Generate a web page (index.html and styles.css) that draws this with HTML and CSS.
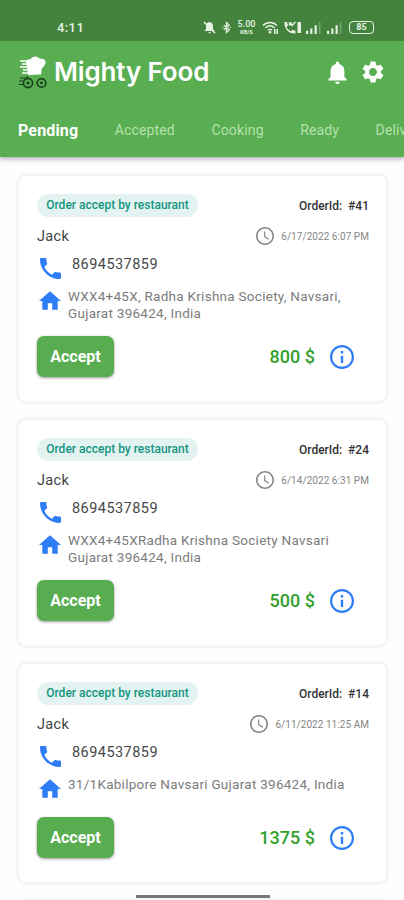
FILE: index.html
```html
<!DOCTYPE html>
<html lang="en">
<head>
<meta charset="utf-8">
<title>Mighty Food</title>
<link rel="stylesheet" href="styles.css">
</head>
<body>
<svg class="defs" aria-hidden="true">
  <symbol id="phone" viewBox="3 3 18 18"><path d="M6.62 10.79c1.44 2.83 3.76 5.14 6.59 6.59l2.2-2.2c.27-.27.67-.36 1.02-.24 1.12.37 2.33.57 3.57.57.55 0 1 .45 1 1V20c0 .55-.45 1-1 1C10.61 21 3 13.39 3 4c0-.55.45-1 1-1h3.500c.55 0 1 .45 1 1 0 1.250.2 2.450.57 3.570.11.35.03.74-.25 1.020l-2.200 2.200z"/></symbol>
  <symbol id="home" viewBox="2 3 20 17"><path d="M10 20v-6h4v6h5v-8h3L12 3 2 12h3v8z"/></symbol>
  <symbol id="clock" viewBox="2 2 20 20"><path d="M11.990 2C6.470 2 2 6.480 2 12s4.470 10 9.990 10C17.520 22 22 17.520 22 12S17.520 2 11.990 2zM12 20.300a8.300 8.300 0 1 1 0-16.600 8.300 8.300 0 0 1 0 16.600zM12.300 7H11v6l5 3.100.7-1.100-4.400-2.700z"/></symbol>
  <symbol id="info" viewBox="2 2 20 20"><path d="M11 7h2v2h-2zm0 4h2v6h-2zm1-9C6.480 2 2 6.480 2 12s4.480 10 10 10 10-4.480 10-10S17.520 2 12 2zm0 18.200a8.200 8.200 0 1 1 0-16.400 8.200 8.200 0 0 1 0 16.400z"/></symbol>
  <symbol id="signal" viewBox="0 0 14 11"><path d="M0 8h2v3H0zM4 6h2v5H4zM8 3h2v8H8z"/><path opacity=".3" d="M12 0h1.500v11H12z"/></symbol>
</svg>

<header class="header">
  <div class="status">
    <span class="time">4:11</span>
    <div class="status-icons">
      <svg class="s-mute" viewBox="0 0 13 13"><path d="M6.500 1c-2.600.4-3.500 2-3.500 4v3L1.500 10h10L10 8V5c0-2-1-3.600-3.500-4zM5 11h3l-1.500 1.500z"/><path class="slash" d="M1 1l11 11"/></svg>
      <svg class="s-bt" viewBox="0 0 10 13"><path class="line" d="M2 4l6 5-3 3V1l3 3-6 5M.3 6.500h1M8.700 6.500h1"/></svg>
      <span class="speed"><b>5.00</b><i>KB/S</i></span>
      <svg class="s-wifi" viewBox="0 0 17 13"><path class="line" d="M1 4.500c4-4 10-4 14 0M3.300 7c3-2.700 6.500-2.700 9.400 0M5.800 9.300c1.500-1.200 3-1.200 4.400 0"/><circle cx="8" cy="11.300" r="1.300"/><path d="M12 8h1.500v5H12zM14.500 8H16v5h-1.500z"/></svg>
      <svg class="s-call" viewBox="0 0 18 13"><path d="M1 1h2.500l1 3.500L3 6c1 2 2.500 3.500 4.500 4.300l1.300-1.500L12 10v2.500C5.500 13 .5 8 1 1z"/><path class="line" d="M6 2l2.500 2.500L12 1M6 4.500V2h2.500"/><path d="M14 1h3.500v11H14z"/></svg>
      <svg class="s-sig"><use href="#signal"/></svg>
      <svg class="s-sig"><use href="#signal"/></svg>
      <span class="battery">85</span>
    </div>
  </div>
  <div class="appbar">
    <svg class="logo" viewBox="0 0 30 34">
      <path class="white" d="M10 19L9 10C6.500 6 9 2.500 12.500 3.500 14-.5 20-.5 22 3c4-1 7 2 5 5.500-1 2-2 3-3 3.500l-1 6.500z"/>
      <path class="w-line" d="M2 5h8M4 8h6M2 11h8M5 14h5M4 17h7"/>
      <path class="b-line" d="M2 22h6M1 25h4M1 28.500h4M9 20l1 3"/>
      <circle class="wheel" cx="10" cy="27" r="4.600"/><circle cx="10" cy="27" r="1.500"/>
      <circle class="wheel" cx="23.500" cy="27" r="4.300"/><circle cx="23.500" cy="27" r="1.400"/>
    </svg>
    <h1 class="title">Mighty Food</h1>
    <svg class="bell" viewBox="4 2 16 20"><path d="M12 22c1.100 0 2-.9 2-2h-4c0 1.100.89 2 2 2zm6-6v-5c0-3.070-1.640-5.640-4.500-6.320V4c0-.83-.67-1.500-1.500-1.500s-1.500.67-1.500 1.500v.68C7.630 5.360 6 7.920 6 11v5l-2 2v1h16v-1l-2-2z"/></svg>
    <svg class="gear" viewBox="2 2 20 20"><path d="M19.140 12.940c.04-.3.06-.61.06-.94 0-.32-.02-.64-.07-.94l2.030-1.580a.49.49 0 0 0 .12-.61l-1.920-3.320a.488.488 0 0 0-.59-.22l-2.390.96c-.5-.38-1.030-.7-1.620-.94l-.36-2.540a.484.484 0 0 0-.48-.41h-3.840c-.24 0-.43.17-.47.41l-.36 2.540c-.59.24-1.130.57-1.620.94l-2.390-.96c-.22-.08-.47 0-.59.22L2.740 8.870c-.12.21-.08.47.12.61l2.030 1.580c-.05.3-.09.63-.09.94s.02.64.07.94l-2.030 1.580a.49.49 0 0 0-.12.61l1.920 3.320c.12.22.37.29.59.22l2.390-.96c.5.38 1.030.7 1.620.94l.36 2.540c.05.24.24.41.48.41h3.840c.24 0 .44-.17.47-.41l.36-2.540c.59-.24 1.130-.56 1.620-.94l2.390.96c.22.08.47 0 .59-.22l1.920-3.320c.12-.22.07-.47-.12-.61l-2.010-1.580zM12 15.600A3.610 3.610 0 0 1 8.400 12c0-1.980 1.620-3.600 3.600-3.600s3.600 1.620 3.600 3.600-1.620 3.600-3.600 3.600z"/></svg>
  </div>
  <nav class="tabs">
    <span class="tab active">Pending</span>
    <span class="tab">Accepted</span>
    <span class="tab">Cooking</span>
    <span class="tab">Ready</span>
    <span class="tab">Delivered</span>
  </nav>
</header>

<main class="orders">
  <article class="card">
    <div class="row top"><span class="pill">Order accept by restaurant</span><span class="order-id">OrderId:&nbsp; #41</span></div>
    <div class="row who"><span class="name">Jack</span><span class="date"><svg class="clock"><use href="#clock"/></svg><span class="stamp">6/17/2022 6:07 PM</span></span></div>
    <div class="phone"><svg class="phone-icon"><use href="#phone"/></svg><span class="number">8694537859</span></div>
    <div class="address"><svg class="home-icon"><use href="#home"/></svg><p class="place">WXX4+45X, Radha Krishna Society, Navsari,<br>Gujarat 396424, India</p></div>
    <div class="row actions"><button class="accept">Accept</button><span class="total"><span class="price">800 $</span><svg class="info"><use href="#info"/></svg></span></div>
  </article>
  <article class="card">
    <div class="row top"><span class="pill">Order accept by restaurant</span><span class="order-id">OrderId:&nbsp; #24</span></div>
    <div class="row who"><span class="name">Jack</span><span class="date"><svg class="clock"><use href="#clock"/></svg><span class="stamp">6/14/2022 6:31 PM</span></span></div>
    <div class="phone"><svg class="phone-icon"><use href="#phone"/></svg><span class="number">8694537859</span></div>
    <div class="address"><svg class="home-icon"><use href="#home"/></svg><p class="place">WXX4+45XRadha Krishna Society Navsari<br>Gujarat 396424, India</p></div>
    <div class="row actions"><button class="accept">Accept</button><span class="total"><span class="price">500 $</span><svg class="info"><use href="#info"/></svg></span></div>
  </article>
  <article class="card">
    <div class="row top"><span class="pill">Order accept by restaurant</span><span class="order-id">OrderId:&nbsp; #14</span></div>
    <div class="row who"><span class="name">Jack</span><span class="date"><svg class="clock"><use href="#clock"/></svg><span class="stamp">6/11/2022 11:25 AM</span></span></div>
    <div class="phone"><svg class="phone-icon"><use href="#phone"/></svg><span class="number">8694537859</span></div>
    <div class="address"><svg class="home-icon"><use href="#home"/></svg><p class="place">31/1Kabilpore Navsari Gujarat 396424, India</p></div>
    <div class="row actions"><button class="accept">Accept</button><span class="total"><span class="price">1375 $</span><svg class="info"><use href="#info"/></svg></span></div>
  </article>
  <article class="card"></article>
</main>
<div class="home-bar"></div>
</body>
</html>
```
FILE: styles.css
```css
* { box-sizing: border-box; }
body {
  display: flex;
  flex-direction: column;
  margin: 0;
  height: 900px;
  overflow: hidden;
  background: #fefefe;
  font-family: Roboto, sans-serif;
  color: #444;
}
svg { display: block; flex: none; fill: currentColor; }
.defs { position: absolute; width: 0; height: 0; }

.header {
  flex: none;
  height: 157px;
  background: #58ae51;
  color: #fff;
  box-shadow: 0 2px 5px rgba(60, 50, 90, .4);
}
.status {
  display: flex;
  justify-content: space-between;
  height: 41px;
  padding: 20px 30px 0 57px;
  background: #44833e;
  color: #e6f3e2;
}
.time { font-size: 13px; line-height: 16px; font-weight: 500; letter-spacing: .4px; }
.status-icons { display: flex; align-items: center; height: 15px; }
.line, .slash { fill: none; stroke: currentColor; stroke-width: 1.4; }
.slash { stroke-width: 1.600; }
.s-mute { width: 13px; height: 13px; margin-right: 6px; }
.s-bt { width: 9px; height: 13px; margin-right: 6px; }
.speed { width: 19px; margin-right: 6px; text-align: center; }
.speed b, .speed i { display: block; font-style: normal; }
.speed b { font-size: 9px; line-height: 9px; font-weight: 500; }
.speed i { font-size: 5.500px; line-height: 7px; font-weight: 700; }
.s-wifi { width: 17px; height: 13px; margin-right: 4px; }
.s-call { width: 19px; height: 13px; margin-right: 4px; }
.s-sig { width: 15px; height: 12px; margin-right: 6px; }
.battery {
  width: 25px;
  height: 13px;
  margin-left: 1px;
  border: 1.500px solid currentColor;
  border-radius: 4px;
  font-size: 9px;
  line-height: 11px;
  font-weight: 700;
  text-align: center;
}
.appbar { display: flex; align-items: center; height: 62px; padding: 0 20px 0 18px; }
.logo { width: 30px; height: 34px; margin-top: 1px; }
.white { fill: #fff; }
.w-line { fill: none; stroke: #fff; stroke-width: 1.300; }
.b-line, .wheel { fill: none; stroke: #163c19; stroke-width: 1.200; }
.wheel { stroke-width: 1.600; }
.logo circle:not(.wheel) { fill: #163c19; }
.title {
  flex: 1;
  margin: 0 0 0 6px;
  font: 600 26px/34px Inter, sans-serif;
  letter-spacing: -.15px;
  white-space: nowrap;
}
.bell { width: 19px; height: 23px; margin-right: 15px; }
.gear { width: 22px; height: 22px; }
.tabs { display: flex; align-items: center; height: 54px; padding-left: 18px; overflow: hidden; }
.tab { flex: none; margin-right: 36.500px; font-size: 14px; letter-spacing: .15px; color: #b6e0ad; }
.tab.active { font-size: 16px; font-weight: 700; color: #fff; }

.orders { flex: 1; min-height: 0; overflow: hidden; display: flex; flex-direction: column; gap: 13px; margin-top: 6px; padding: 10px 15px 0 16px; }
.card {
  flex: none;
  padding: 18px 17px 24px 18px;
  border: 3px solid #f5f5f6;
  border-radius: 10px;
  background: #fff;
}
.row { display: flex; align-items: center; justify-content: space-between; }
.top { height: 23px; }
.pill {
  width: 161px;
  height: 23px;
  border-radius: 12px;
  background: #e3f3f1;
  color: #159581;
  font-size: 12px;
  line-height: 23px;
  font-weight: 500;
  text-align: center;
  white-space: nowrap;
}
.order-id { font-size: 12px; font-weight: 500; color: #333; }
.who { height: 22px; margin-top: 8px; }
.name { padding-top: 1px; font-size: 14.500px; letter-spacing: .3px; }
.date { display: flex; align-items: center; gap: 7px; color: #858585; }
.clock { width: 18px; height: 18px; }
.stamp { font-size: 10px; letter-spacing: .05px; }
.phone { display: flex; height: 26px; margin-top: 6px; padding-left: 3px; color: #2e7cf6; }
.phone-icon { width: 21px; height: 21px; margin-top: 5px; }
.number { margin-left: 11px; font-size: 14.500px; line-height: 24px; letter-spacing: .45px; color: #484848; }
.address { display: flex; min-height: 26px; margin-top: 9px; padding-left: 2px; color: #2e7cf6; }
.home-icon { width: 22px; height: 19px; margin-top: 3px; }
.place { margin: 0 0 0 7px; font-size: 13.500px; line-height: 16.500px; letter-spacing: .27px; color: #7c7c7c; white-space: nowrap; }
.actions { height: 41px; margin-top: 15px; }
.accept {
  width: 77px;
  height: 41px;
  padding: 0;
  border: 0;
  border-radius: 7px;
  background: #57ad50;
  box-shadow: 0 1px 3px rgba(0, 0, 0, .4);
  color: #fff;
  font: 700 16px Roboto, sans-serif;
}
.total { display: flex; align-items: center; gap: 15px; padding-right: 15px; }
.price { font-size: 18px; font-weight: 500; color: #33a02c; }
.info { width: 24px; height: 24px; color: #2e7cf6; }
.home-bar {
  position: fixed;
  left: 136px;
  top: 895px;
  width: 134px;
  height: 3px;
  background: #777;
}
```
